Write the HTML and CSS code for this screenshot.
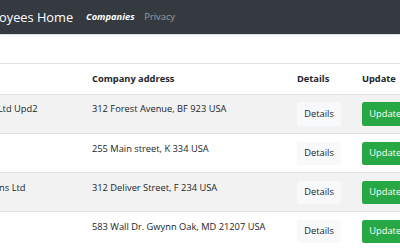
FILE: index.html
```html
<!DOCTYPE html>
<html lang="en">
<head>
    <meta charset="UTF-8">
    <meta name="viewport" content="width=device-width, initial-scale=1.0">
    <title>Companies - Employees Home</title>
    <link rel="stylesheet" href="styles.css">
</head>
<body>

    <header class="navbar">
        <div class="nav-inner">
            <a class="brand" href="#">Employees Home</a>
            <nav class="nav-links">
                <a class="nav-link active" href="#">Companies</a>
                <a class="nav-link" href="#">Privacy</a>
            </nav>
        </div>
    </header>

    <main class="main">
        <table class="table">
            <thead>
                <tr>
                    <th class="col-name">Name</th>
                    <th class="col-address">Company address</th>
                    <th class="col-details">Details</th>
                    <th class="col-update">Update</th>
                    <th class="col-delete">Delete</th>
                </tr>
            </thead>
            <tbody>
                <tr>
                    <td>Northwind Ltd Upd2</td>
                    <td>312 Forest Avenue, BF 923 USA</td>
                    <td><a class="btn btn-light" href="#">Details</a></td>
                    <td><a class="btn btn-success" href="#">Update</a></td>
                    <td><a class="btn btn-danger" href="#">Delete</a></td>
                </tr>
                <tr>
                    <td>Acme</td>
                    <td>255 Main street, K 334 USA</td>
                    <td><a class="btn btn-light" href="#">Details</a></td>
                    <td><a class="btn btn-success" href="#">Update</a></td>
                    <td><a class="btn btn-danger" href="#">Delete</a></td>
                </tr>
                <tr>
                    <td>Fast Solutions Ltd</td>
                    <td>312 Deliver Street, F 234 USA</td>
                    <td><a class="btn btn-light" href="#">Details</a></td>
                    <td><a class="btn btn-success" href="#">Update</a></td>
                    <td><a class="btn btn-danger" href="#">Delete</a></td>
                </tr>
                <tr>
                    <td>Wall Co</td>
                    <td>583 Wall Dr. Gwynn Oak, MD 21207 USA</td>
                    <td><a class="btn btn-light" href="#">Details</a></td>
                    <td><a class="btn btn-success" href="#">Update</a></td>
                    <td><a class="btn btn-danger" href="#">Delete</a></td>
                </tr>
            </tbody>
        </table>
    </main>

</body>
</html>
```

FILE: styles.css
```css
body {
    font-family: "Open Sans", "Noto Sans", sans-serif;
    font-size: 9.3px;
    line-height: 14.76px;
    color: #212529;
    background: #fff;
    margin: 0;
    overflow: hidden;
}

a {
    text-decoration: none;
}

/* barre de navigation */
.navbar {
    background: #343a40;
    border-bottom: 1px solid #dee2e6;
    box-shadow: 0 1px 2px rgba(0, 0, 0, 0.05);
    padding: 4.9px 0;
}

.nav-inner {
    display: flex;
    align-items: center;
    margin-left: -31px;
}

.brand {
    color: #fff;
    font-size: 12.8px;
    line-height: 18.45px;
    padding: 3.1px 0;
    margin-right: 8px;
}

.nav-links {
    display: flex;
}

.nav-link {
    color: rgba(255, 255, 255, 0.5);
    padding: 4.9px;
}

.nav-link.active {
    color: #fff;
    font-weight: bold;
    font-style: italic;
}

/* tableau des sociétés */
.main {
    width: 640px;
    margin-left: -58.4px;
    padding-top: 28px;
}

.table {
    width: 100%;
    border-collapse: collapse;
    table-layout: fixed;
}

.table th,
.table td {
    text-align: left;
    vertical-align: top;
    padding: 7.4px;
    border-top: 1px solid #dee2e6;
    white-space: nowrap;
    overflow: hidden;
}

.table thead th {
    vertical-align: bottom;
    border-bottom: 1px solid #dee2e6;
}

.table tbody tr:nth-child(odd) {
    background: rgba(0, 0, 0, 0.05);
}

.col-name { width: 128.2px; }
.col-address { width: 190.2px; }
.col-details { width: 50.2px; }
.col-update { width: 55.2px; }

.btn {
    display: inline-block;
    padding: 4.3px 7.4px;
    border-radius: 2.5px;
    line-height: 14.76px;
}

.btn-light {
    background: #f8f9fa;
    color: #212529;
}

.btn-success {
    background: #28a745;
    color: #fff;
}

.btn-danger {
    background: #dc3545;
    color: #fff;
}
```
